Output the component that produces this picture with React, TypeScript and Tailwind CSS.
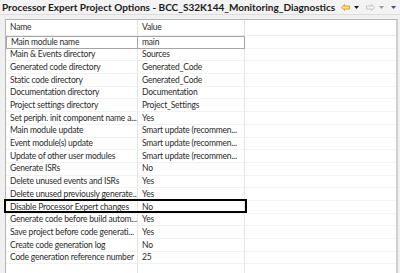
import type { ReactNode } from 'react';

type Option = { name: string; value: string };

const options: Option[] = [
  { name: 'Main module name', value: 'main' },
  { name: 'Main & Events directory', value: 'Sources' },
  { name: 'Generated code directory', value: 'Generated_Code' },
  { name: 'Static code directory', value: 'Generated_Code' },
  { name: 'Documentation directory', value: 'Documentation' },
  { name: 'Project settings directory', value: 'Project_Settings' },
  { name: 'Set periph. init component name a...', value: 'Yes' },
  { name: 'Main module update', value: 'Smart update (recommen...' },
  { name: 'Event module(s) update', value: 'Smart update (recommen...' },
  { name: 'Update of other user modules', value: 'Smart update (recommen...' },
  { name: 'Generate ISRs', value: 'No' },
  { name: 'Delete unused events and ISRs', value: 'Yes' },
  { name: 'Delete unused previously generate...', value: 'Yes' },
  { name: 'Disable Processor Expert changes', value: 'No' },
  { name: 'Generate code before build autom...', value: 'Yes' },
  { name: 'Save project before code generati...', value: 'Yes' },
  { name: 'Create code generation log', value: 'No' },
  { name: 'Code generation reference number', value: '25' },
];

function BackArrow({ enabled }: { enabled: boolean }) {
  const fill = enabled ? '#fbe38c' : '#f4f4f4';
  const stroke = enabled ? '#d9a21b' : '#c4c4c4';
  return (
    <svg width="9" height="7" viewBox="0 0 9 7">
      <path
        d={enabled ? 'M0.5 3.5 L3.5 0.5 V2 H8.5 V5 H3.5 V6.5 Z' : 'M8.5 3.5 L5.5 0.5 V2 H0.5 V5 H5.5 V6.5 Z'}
        fill={fill}
        stroke={stroke}
        strokeWidth="1"
        strokeLinejoin="round"
      />
    </svg>
  );
}

function Caret({ color }: { color: string }) {
  return (
    <svg width="5" height="3" viewBox="0 0 5 3">
      <path d="M0 0 H5 L2.5 3 Z" fill={color} />
    </svg>
  );
}

function Cell({ children, className = '' }: { children?: ReactNode; className?: string }) {
  return (
    <div className={`flex items-center pl-[4px] whitespace-nowrap overflow-hidden ${className}`}>
      {children}
    </div>
  );
}

export default function App() {
  return (
    <div
      className="w-[400px] h-[273px] bg-[#f0f0f0] overflow-hidden text-[#2a2a2a]"
      style={{ fontFamily: 'Lato, "Noto Sans", sans-serif' }}
    >
      {/* view title with history buttons */}
      <div className="h-[15px] flex items-center justify-between pl-[2px] pr-[4px] border-b border-[#dcdcdc] bg-[#f3f3f3]">
        <span className="text-[10px] font-bold leading-none whitespace-nowrap text-[#1a1a1a]">
          Processor Expert Project Options - BCC_S32K144_Monitoring_Diagnostics
        </span>
        <div className="flex items-center gap-[4px]">
          <BackArrow enabled />
          <Caret color="#1a1a1a" />
          <span className="ml-[3px]">
            <BackArrow enabled={false} />
          </span>
          <Caret color="#9a9a9a" />
          <span className="ml-[3px]">
            <Caret color="#5b3c8c" />
          </span>
        </div>
      </div>

      <div className="pt-[4px] pl-[5px] pr-[2px]">
        <div className="h-[260px] bg-white border-l border-t border-[#b4b4b4] border-r-2 border-r-[#cfcfcf] text-[8.5px] tracking-[-0.2px] leading-none">
          {/* header */}
          <div className="grid grid-cols-[132px_107px_1fr] h-[16px] border-b border-[#ececec]">
            <Cell className="border-r border-[#e2e2e2]">Name</Cell>
            <Cell className="border-r border-[#e2e2e2]">Value</Cell>
            <Cell />
          </div>

          {options.map((o, i) => {
            const selected = i === 0;
            const marked = o.name === 'Disable Processor Expert changes';
            return (
              <div key={o.name} className="relative grid grid-cols-[132px_107px_1fr] h-[12.7px]">
                <Cell
                  className={
                    selected
                      ? 'border border-[#a6a6a6]'
                      : 'border-r border-b border-r-[#e4e4e4] border-b-[#f2f2f2]'
                  }
                >
                  {o.name}
                </Cell>
                <Cell
                  className={
                    selected
                      ? 'border-y border-r border-[#a6a6a6]'
                      : 'border-r border-b border-r-[#e4e4e4] border-b-[#f2f2f2]'
                  }
                >
                  {o.value}
                </Cell>
                <Cell className="border-b border-[#f4f4f4]" />
                {marked && (
                  <div className="absolute left-[-2px] top-[-2px] w-[243px] h-[14.5px] border-[2.5px] border-black" />
                )}
              </div>
            );
          })}

          {/* blank filler row below the list */}
          <div className="grid grid-cols-[132px_107px_1fr] h-[20px]">
            <Cell className="border-r border-[#e4e4e4]" />
            <Cell className="border-r border-[#e4e4e4]" />
            <Cell />
          </div>
        </div>
      </div>
    </div>
  );
}
